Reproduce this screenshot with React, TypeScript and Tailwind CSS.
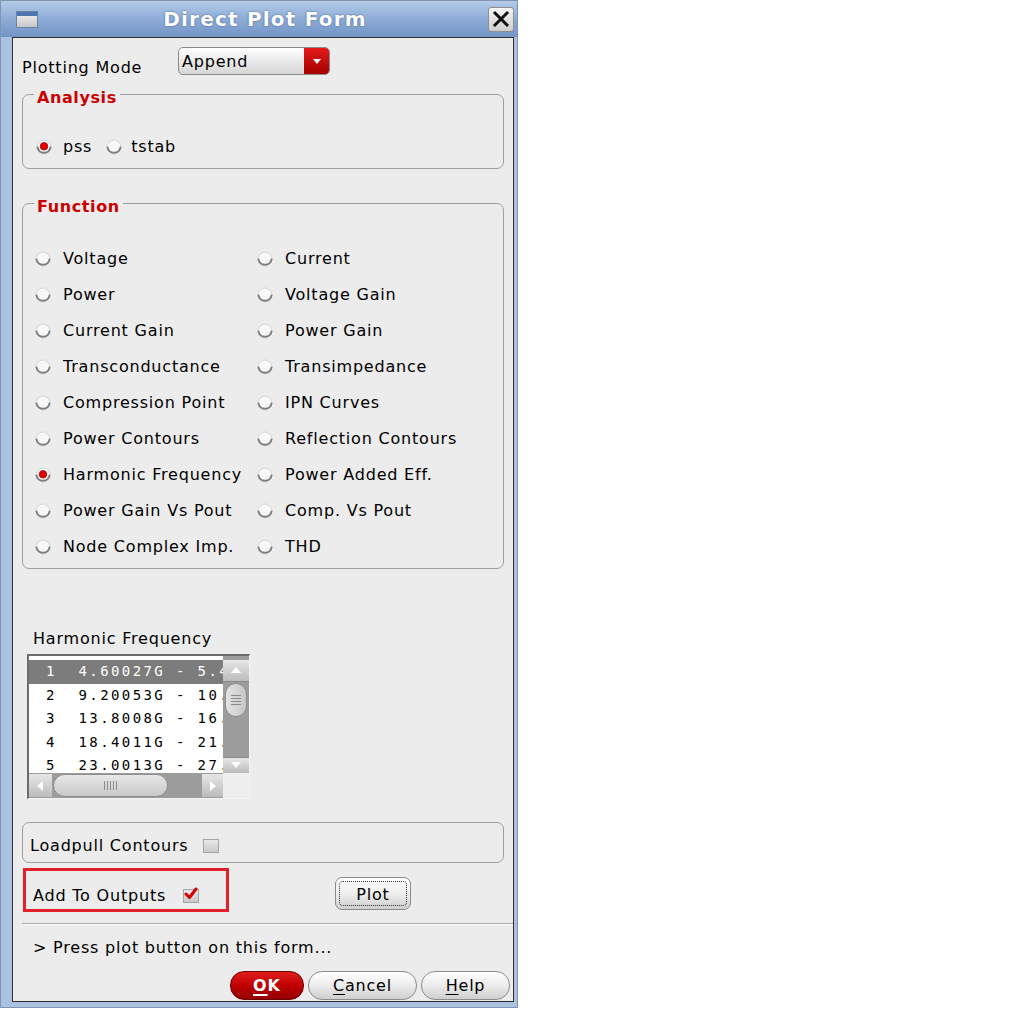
import React from "react";

const font = "font-['DejaVu_Sans',sans-serif]";
const mono = "font-['DejaVu_Sans_Mono',monospace]";

function Radio({ on }: { on?: boolean }) {
  return (
    <svg width="16" height="16" viewBox="0 0 16 16" className="shrink-0">
      <circle cx="8" cy="8" r="7" fill="#f8f8f8" stroke="#cfcfcf" strokeWidth="0.9" />
      <path d="M1.5 8.4 A6.6 6.6 0 0 0 14.5 8.4" fill="none" stroke="#7e7e7e" strokeWidth="2" strokeLinecap="round" />
      {on && <circle cx="8" cy="7.3" r="3.8" fill="#e40000" stroke="#9c0000" strokeWidth="0.7" />}
    </svg>
  );
}

function CheckBox({ checked }: { checked?: boolean }) {
  return (
    <span className="relative inline-block w-[16px] h-[14px] shrink-0 border border-[#a4a4a4] bg-gradient-to-b from-[#e9e9e9] to-[#c9c9c9]">
      {checked && (
        <svg width="16" height="14" viewBox="0 0 16 14" className="absolute -left-[1px] -top-[3px]">
          <path d="M3 7 L6.5 10.5 L13 2" fill="none" stroke="#d40000" strokeWidth="3" strokeLinecap="round" strokeLinejoin="round" />
        </svg>
      )}
    </span>
  );
}

function Group({ title, className, children }: { title: string; className: string; children: React.ReactNode }) {
  return (
    <div className={`relative rounded-[7px] border border-[#9e9e9e] ${className}`}>
      <span className="absolute left-[11px] -top-[7px] px-[3px] bg-[#ececec] text-[16px] leading-[20px] font-bold tracking-[0.6px] text-[#cc0000]">
        {title}
      </span>
      {children}
    </div>
  );
}

const functions = [
  ["Voltage", "Current"],
  ["Power", "Voltage Gain"],
  ["Current Gain", "Power Gain"],
  ["Transconductance", "Transimpedance"],
  ["Compression Point", "IPN Curves"],
  ["Power Contours", "Reflection Contours"],
  ["Harmonic Frequency", "Power Added Eff."],
  ["Power Gain Vs Pout", "Comp. Vs Pout"],
  ["Node Complex Imp.", "THD"],
];

const harmonics = [
  "1  4.60027G - 5.4",
  "2  9.20053G - 10.",
  "3  13.8008G - 16.",
  "4  18.4011G - 21.",
  "5  23.0013G - 27.",
];

function Arrow({ dir }: { dir: "up" | "down" | "left" | "right" }) {
  const d = {
    up: "M2 9 L7 3 L12 9 Z",
    down: "M2 4 L7 10 L12 4 Z",
    left: "M9 2 L3 7 L9 12 Z",
    right: "M4 2 L10 7 L4 12 Z",
  }[dir];
  return (
    <svg width="14" height="14" viewBox="0 0 14 14">
      <path d={d} fill="#ffffff" />
    </svg>
  );
}

function HarmonicList() {
  return (
    <div className="ml-[5px] mt-[5px] w-[223px] h-[145px] border-l-2 border-t-2 border-r border-b border-l-[#6c6c6c] border-t-[#6c6c6c] border-r-[#f4f4f4] border-b-[#f4f4f4] grid grid-cols-[194px_26px] grid-rows-[117px_25px] bg-white">
      <div className={`pt-[4px] overflow-hidden ${mono} text-[14px] tracking-[2.4px]`}>
        {harmonics.map((h, i) => (
          <div
            key={h}
            className={`h-[23.5px] leading-[23px] pl-[17px] whitespace-pre ${i === 0 ? "bg-[#7c7c7c] text-white" : "text-black"}`}
          >
            {h}
          </div>
        ))}
      </div>
      <div className="flex flex-col pt-[4px] bg-[#9c9c9c]">
        <div className="h-[22px] flex items-center justify-center bg-gradient-to-b from-[#e6e6e6] to-[#bcbcbc] border-b border-[#8a8a8a]">
          <Arrow dir="up" />
        </div>
        <div className="flex-1 flex flex-col">
          <div className="mt-[1px] mx-[2px] h-[34px] rounded-full border border-[#8e8e8e] bg-gradient-to-r from-[#e4e4e4] to-[#c6c6c6] flex flex-col items-center justify-center gap-[2px]">
            <span className="w-[10px] h-[1px] bg-[#8c8c8c]" />
            <span className="w-[10px] h-[1px] bg-[#8c8c8c]" />
            <span className="w-[10px] h-[1px] bg-[#8c8c8c]" />
            <span className="w-[10px] h-[1px] bg-[#8c8c8c]" />
          </div>
        </div>
        <div className="h-[16px] flex items-start justify-center bg-gradient-to-b from-[#e6e6e6] to-[#bcbcbc] border-t border-[#8a8a8a]">
          <Arrow dir="down" />
        </div>
      </div>
      <div className="flex bg-[#9c9c9c] py-[1px]">
        <div className="w-[23px] flex items-center justify-center bg-gradient-to-b from-[#e6e6e6] to-[#bcbcbc]">
          <Arrow dir="left" />
        </div>
        <div className="ml-[1px] w-[115px] rounded-full border border-[#8e8e8e] bg-gradient-to-b from-[#e8e8e8] to-[#c8c8c8] flex items-center justify-center gap-[2px]">
          <span className="w-[1px] h-[9px] bg-[#8c8c8c]" />
          <span className="w-[1px] h-[9px] bg-[#8c8c8c]" />
          <span className="w-[1px] h-[9px] bg-[#8c8c8c]" />
          <span className="w-[1px] h-[9px] bg-[#8c8c8c]" />
          <span className="w-[1px] h-[9px] bg-[#8c8c8c]" />
        </div>
        <div className="flex-1" />
        <div className="w-[21px] flex items-center justify-center bg-gradient-to-b from-[#e6e6e6] to-[#bcbcbc]">
          <Arrow dir="right" />
        </div>
      </div>
      <div className="bg-[#eeeeee]" />
    </div>
  );
}

function Button({ children, className }: { children: React.ReactNode; className: string }) {
  return (
    <div
      className={`h-[29px] rounded-[14px] border border-[#8c8c8c] bg-gradient-to-b from-[#ffffff] via-[#ececec] to-[#cfcfcf] flex items-center justify-center text-[16px] tracking-[0.8px] text-black ${className}`}
    >
      {children}
    </div>
  );
}

export default function App() {
  return (
    <div className={`w-[1013px] h-[1010px] bg-white ${font}`}>
      <div className="w-[518px] h-[1008px] flex flex-col border border-[#7f95b3] bg-[#aac2e1]">
        {/* title bar */}
        <div className="h-[36px] shrink-0 flex items-center pl-[15px] pr-[3px] bg-gradient-to-b from-[#b4cbe8] via-[#8eacd7] to-[#7294c5]">
          <div className="w-[22px] h-[17px] border border-[#6a82a6] bg-gradient-to-b from-[#f6f6f6] to-[#c6c6c6] flex flex-col">
            <div className="h-[4px] bg-[#4f74b1]" />
          </div>
          <div className="flex-1 text-center text-white font-bold text-[20px] tracking-[1.2px] pl-[4px] [text-shadow:0_0_2px_#3b5b8c]">
            Direct Plot Form
          </div>
          <div className="w-[26px] h-[25px] rounded-[3px] border border-[#8f8f8f] bg-gradient-to-b from-[#f6f6f6] to-[#cdcdcd] flex items-center justify-center">
            <svg width="18" height="18" viewBox="0 0 18 18">
              <path d="M3 3 L15 15 M15 3 L3 15" stroke="#111111" strokeWidth="3" strokeLinecap="square" />
            </svg>
          </div>
        </div>

        {/* content */}
        <div className="ml-[11px] mr-[3px] h-[965px] shrink-0 border border-[#2e2e2e] bg-[#ececec] flex flex-col px-[9px] pt-[9px] text-black text-[16px] tracking-[0.8px]">
          <div className="h-[28px] flex items-start">
            <span className="mt-[11px] leading-[20px] w-[156px]">Plotting Mode</span>
            <div className="w-[152px] h-[28px] rounded-[5px] border border-[#8a8a8a] bg-gradient-to-b from-[#ffffff] to-[#d6d6d6] flex items-stretch">
              <span className="flex-1 pl-[3px] pt-[1px] leading-[26px]">Append</span>
              <span className="w-[25px] rounded-r-[4px] bg-gradient-to-b from-[#e41a1a] to-[#a60000] flex items-center justify-center">
                <svg width="10" height="7" viewBox="0 0 10 7">
                  <path d="M1 1 L9 1 L5 6 Z" fill="#ffffff" />
                </svg>
              </span>
            </div>
          </div>

          <Group title="Analysis" className="mt-[19px] h-[75px] pt-[42px] pl-[13px]">
            <div className="h-[20px] flex items-center leading-[20px]">
              <Radio on />
              <span className="ml-[11px]">pss</span>
              <span className="ml-[14px]">
                <Radio />
              </span>
              <span className="ml-[9px]">tstab</span>
            </div>
          </Group>

          <Group title="Function" className="mt-[34px] h-[366px] pt-[37px] pl-[12px]">
            <div className="grid grid-cols-[222px_1fr]">
              {functions.flat().map((f) => (
                <div key={f} className="h-[36px] flex items-center gap-[12px] leading-[20px]">
                  <Radio on={f === "Harmonic Frequency"} />
                  <span>{f}</span>
                </div>
              ))}
            </div>
          </Group>

          <div className="mt-[60px] ml-[11px] leading-[20px]">Harmonic Frequency</div>
          <HarmonicList />

          <div className="mt-[23px] h-[41px] rounded-[7px] border border-[#9e9e9e] pt-[13px] pl-[7px] flex items-start">
            <div className="h-[20px] flex items-center gap-[15px] leading-[20px]">
              <span>Loadpull Contours</span>
              <CheckBox />
            </div>
          </div>

          <div className="mt-[5px] flex items-start">
            <div className="ml-[1px] w-[206px] h-[44px] border-[3px] border-[#e2202a] pt-[15px] pl-[7px]">
              <div className="h-[20px] flex items-center gap-[17px] leading-[20px]">
                <span>Add To Outputs</span>
                <CheckBox checked />
              </div>
            </div>
            <div className="mt-[9px] ml-[106px] w-[76px] h-[33px] rounded-[7px] border border-[#8a8a8a] bg-gradient-to-b from-[#ffffff] via-[#eeeeee] to-[#cfcfcf] p-[3px]">
              <div className="h-full pt-[2px] rounded-[4px] border border-dotted border-[#333333] flex items-center justify-center">
                Plot
              </div>
            </div>
          </div>

          <div className="mt-[11px] -mr-[9px] h-[2px] border-t border-[#a8a8a8] bg-white" />

          <div className="mt-[13px] ml-[11px] leading-[20px]">&gt; Press plot button on this form...</div>

          <div className="mt-[13px] -mr-[6px] flex justify-end gap-[4px]">
            <div className="w-[74px] h-[29px] rounded-[14px] border border-[#6e0000] bg-gradient-to-b from-[#e01c1c] via-[#c00000] to-[#940000] flex items-center justify-center text-white font-bold text-[16px] tracking-[1px]">
              <span className="underline underline-offset-[3px] decoration-[1.5px]">O</span>K
            </div>
            <Button className="w-[109px]">
              <span className="underline underline-offset-[3px]">C</span>ancel
            </Button>
            <Button className="w-[89px]">
              <span className="underline underline-offset-[3px]">H</span>elp
            </Button>
          </div>
        </div>
      </div>
    </div>
  );
}
